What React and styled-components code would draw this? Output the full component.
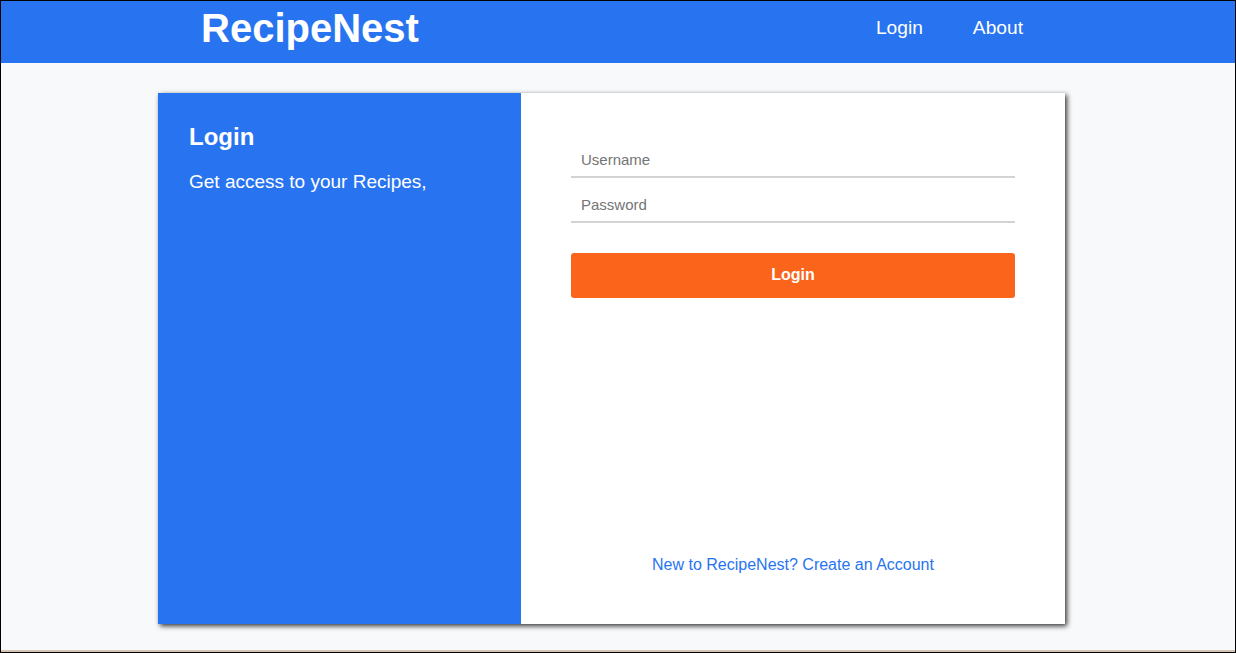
import React from 'react';
import styled, { createGlobalStyle } from 'styled-components';

const blue = '#2874f0';
const orange = '#fb641b';

const GlobalStyle = createGlobalStyle`
  html, body {
    margin: 0;
    padding: 0;
    background: #f8f9fa;
  }
  * {
    box-sizing: border-box;
  }
`;

const Frame = styled.div`
  width: 1236px;
  height: 653px;
  border: 1px solid #000;
  display: flex;
  flex-direction: column;
  background: #f8f9fa;
  font-family: 'Liberation Sans', Arial, sans-serif;
  overflow: hidden;
`;

const Header = styled.header`
  height: 62px;
  flex-shrink: 0;
  background: ${blue};
  display: flex;
  align-items: center;
  justify-content: space-between;
  padding: 0 212px 0 200px;
`;

const Brand = styled.div`
  color: #fff;
  font-size: 40px;
  font-weight: 700;
  line-height: 1;
  margin-top: -8px;
`;

const Nav = styled.nav`
  display: flex;
  gap: 50px;
  margin-top: -8px;
`;

const NavLink = styled.a`
  color: #fff;
  font-size: 19.2px;
  text-decoration: none;
  cursor: pointer;
`;

const Main = styled.main`
  flex: 1;
  display: flex;
  justify-content: flex-start;
  padding: 30px 0 0 157px;
`;

const Card = styled.div`
  width: 907px;
  height: 531px;
  display: flex;
  background: #fff;
  box-shadow: 2px 2px 5px rgba(0, 0, 0, 0.8);
`;

const Aside = styled.div`
  width: 363px;
  background: ${blue};
  padding: 30px 31px;
  color: #fff;
`;

const Title = styled.h2`
  margin: 0 0 20px;
  font-size: 24px;
  font-weight: 700;
`;

const Tagline = styled.p`
  margin: 0;
  font-size: 19px;
`;

const FormPane = styled.div`
  flex: 1;
  display: flex;
  flex-direction: column;
  padding: 47px 50px 50px;
`;

const Input = styled.input`
  width: 100%;
  height: 38px;
  border: none;
  border-bottom: 2px solid #d3d3d3;
  padding: 3px 10px 0;
  font-family: inherit;
  font-size: 15px;
  outline: none;
  margin-bottom: ${p => p.$gap}px;

  &::placeholder {
    color: #757575;
  }
`;

const Button = styled.button`
  height: 45px;
  border: none;
  border-radius: 3px;
  background: ${orange};
  color: #fff;
  font-family: inherit;
  font-size: 16px;
  font-weight: 700;
  padding: 0 0 2px;
  cursor: pointer;
`;

const SignupLink = styled.a`
  margin-top: auto;
  text-align: center;
  color: ${blue};
  font-size: 16px;
  line-height: 18px;
  text-decoration: none;
  cursor: pointer;
`;

const Strip = styled.div`
  height: 2px;
  flex-shrink: 0;
  background: #d6c7b2;
`;

export default function App() {
  return (
    <>
      <GlobalStyle />
      <Frame>
        <Header>
          <Brand>RecipeNest</Brand>
          <Nav>
            <NavLink>Login</NavLink>
            <NavLink>About</NavLink>
          </Nav>
        </Header>
        <Main>
          <Card>
            <Aside>
              <Title>Login</Title>
              <Tagline>Get access to your Recipes,</Tagline>
            </Aside>
            <FormPane>
              <Input type="text" placeholder="Username" $gap={7} />
              <Input type="password" placeholder="Password" $gap={30} />
              <Button>Login</Button>
              <SignupLink>New to RecipeNest? Create an Account</SignupLink>
            </FormPane>
          </Card>
        </Main>
        <Strip />
      </Frame>
    </>
  );
}
